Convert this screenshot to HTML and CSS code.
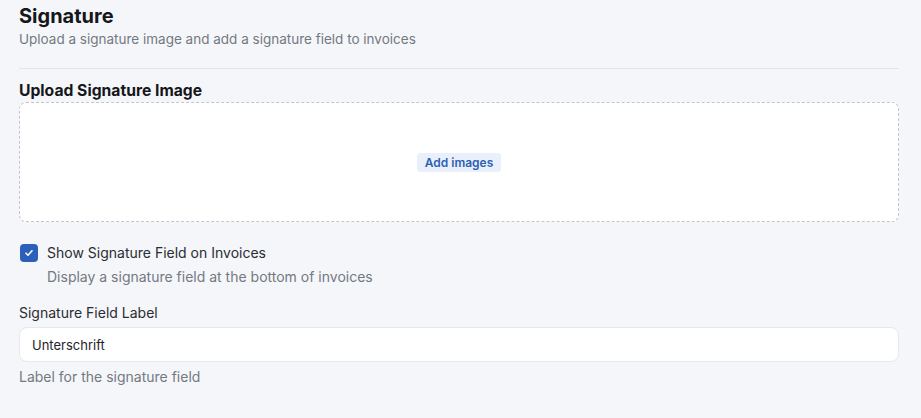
FILE: index.html
```html
<!DOCTYPE html>
<html lang="en">
<head>
  <meta charset="UTF-8">
  <meta name="viewport" content="width=device-width, initial-scale=1.0">
  <title>Signature Settings</title>
  <link rel="stylesheet" href="styles.css">
</head>
<body>
  <div class="settings">
    <div class="section-head">
      <h2>Signature</h2>
      <p class="muted">Upload a signature image and add a signature field to invoices</p>
    </div>

    <div class="field">
      <h3>Upload Signature Image</h3>
      <div class="dropzone">
        <button class="add-btn">Add images</button>
      </div>
    </div>

    <div class="check-row">
      <span class="checkbox">
        <svg width="10" height="10" viewBox="0 0 10 10"><path d="M2 5.2l2 2 4-4.4" fill="none" stroke="#fff" stroke-width="1.6" stroke-linecap="round" stroke-linejoin="round"/></svg>
      </span>
      <div>
        <div class="check-label">Show Signature Field on Invoices</div>
        <div class="muted">Display a signature field at the bottom of invoices</div>
      </div>
    </div>

    <div class="field text-field">
      <label>Signature Field Label</label>
      <input type="text" value="Unterschrift">
      <div class="muted">Label for the signature field</div>
    </div>
  </div>
</body>
</html>
```

FILE: styles.css
```css
body {
  margin: 0;
  background: #f5f6fa;
  font-family: Inter, "Noto Sans", sans-serif;
  color: #1f2329;
}
.settings {
  width: 880px;
  padding: 3px 0 0 19px;
}
.section-head {
  padding-bottom: 19px;
  border-bottom: 1px solid #e3e5ea;
  margin-bottom: 11px;
}
h2 {
  margin: 0;
  font-size: 20px;
  font-weight: 700;
  line-height: 26px;
  color: #15171a;
}
.muted {
  font-size: 14px;
  line-height: 20px;
  color: #737982;
}
.section-head .muted {
  font-size: 13.5px;
  margin: 0;
}
h3 {
  margin: 0 0 1px;
  font-size: 15.7px;
  font-weight: 700;
  line-height: 21px;
  color: #15171a;
}
.dropzone {
  height: 118px;
  background: #fff;
  border: 1px dashed #c2c5ca;
  border-radius: 7px;
  display: flex;
  align-items: center;
  justify-content: center;
}
.add-btn {
  font-family: inherit;
  font-size: 12px;
  font-weight: 600;
  color: #2d5fb3;
  background: #e9f0fb;
  border: none;
  border-radius: 3px;
  padding: 2px 8px;
  line-height: 15px;
}
.check-row {
  display: flex;
  gap: 9px;
  margin-top: 22px;
  padding-left: 1px;
}
.checkbox {
  width: 18px;
  height: 18px;
  border-radius: 4px;
  background: #2b5fb9;
  display: flex;
  align-items: center;
  justify-content: center;
  flex-shrink: 0;
}
.check-label {
  font-size: 14px;
  line-height: 18px;
  color: #2a2d31;
  margin-bottom: 5px;
}
.text-field {
  margin-top: 16px;
}
.text-field label {
  display: block;
  font-size: 14px;
  line-height: 20px;
  color: #2a2d31;
  margin-bottom: 4px;
}
.text-field input {
  box-sizing: border-box;
  width: 880px;
  height: 35px;
  border: 1px solid #e6e8ec;
  border-radius: 8px;
  background: #fff;
  padding: 0 12px;
  font-family: inherit;
  font-size: 13px;
  color: #1f2329;
  margin-bottom: 5px;
  display: block;
}
```
